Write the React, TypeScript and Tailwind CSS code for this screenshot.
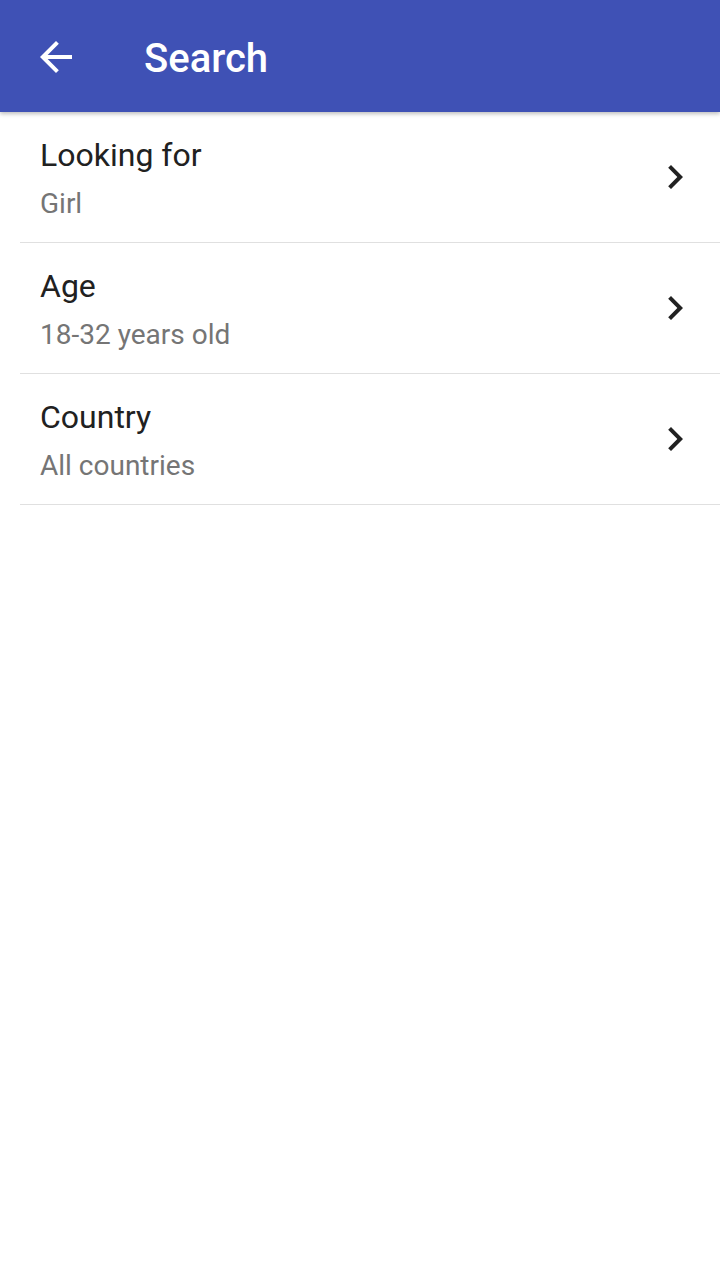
const rows = [
    { title: 'Looking for', value: 'Girl' },
    { title: 'Age', value: '18-32 years old' },
    { title: 'Country', value: 'All countries' },
];

function BackArrow() {
    return (
        <svg width="48" height="48" viewBox="0 0 24 24" fill="white">
            <path d="M20 11H7.83l5.59-5.59L12 4l-8 8 8 8 1.41-1.41L7.83 13H20v-2z" />
        </svg>
    );
}

function Chevron() {
    return (
        <svg width="48" height="48" viewBox="0 0 24 24" fill="#212121">
            <path d="M10 6L8.59 7.41 13.17 12l-4.58 4.59L10 18l6-6z" />
        </svg>
    );
}

export default function App() {
    return (
        <div className="min-h-screen bg-white font-['Roboto',sans-serif]">
            <header className="h-[112px] bg-[#3f51b5] flex items-center shadow-[0_2px_4px_rgba(0,0,0,0.25)] relative z-10">
                <div className="pl-[32px] pr-[64px] pt-[2px] flex items-center">
                    <BackArrow />
                </div>
                <h1 className="text-white text-[40px] font-medium leading-none mt-[5px]">Search</h1>
            </header>

            <main className="pl-[20px]">
                {rows.map((row) => (
                    <div key={row.title} className="flex items-center border-b border-[#e0e0e0] h-[131px]">
                        <div className="flex-1 pl-[20px] pt-[22px] pb-[21px] flex flex-col gap-[12px]">
                            <span className="text-[32px] leading-[40px] text-[#212121]">{row.title}</span>
                            <span className="text-[28px] leading-[34px] text-[#757575]">{row.value}</span>
                        </div>
                        <div className="pr-[21px]">
                            <Chevron />
                        </div>
                    </div>
                ))}
            </main>
        </div>
    );
}
